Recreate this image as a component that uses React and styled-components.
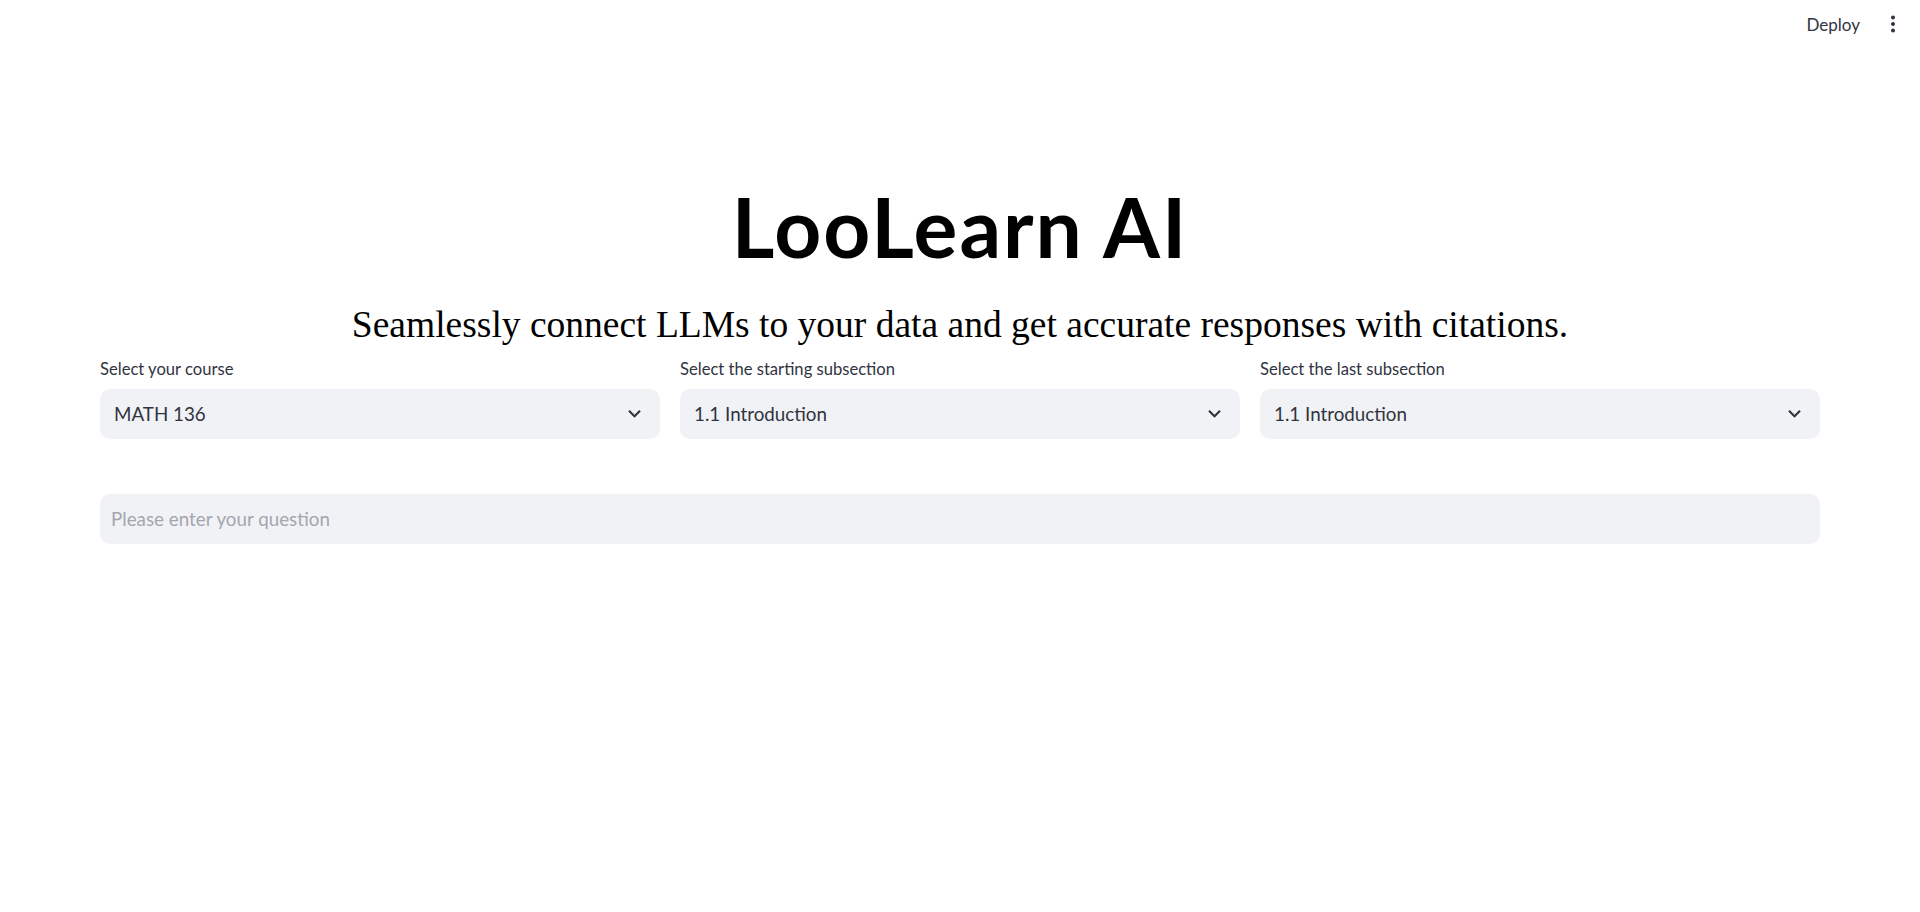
import styled, { createGlobalStyle } from "styled-components";

const GlobalStyle = createGlobalStyle`
  body {
    margin: 0;
    background: #ffffff;
    font-family: "Source Sans Pro", Lato, "Noto Sans", sans-serif;
    color: #31333f;
  }
`;

const Header = styled.header`
  display: flex;
  justify-content: flex-end;
  align-items: center;
  height: 48px;
  padding: 0 24px 0 0;
  gap: 22px;
`;

const DeployBtn = styled.button`
  border: none;
  background: transparent;
  font-family: inherit;
  font-size: 17px;
  color: #31333f;
  padding: 4px 8px;
  cursor: pointer;
`;

const MenuBtn = styled.button`
  border: none;
  background: transparent;
  padding: 0;
  display: flex;
  align-items: center;
  cursor: pointer;
`;

const Main = styled.main`
  padding: 0 100px;
`;

const Title = styled.h1`
  margin: 129px 0 0;
  text-align: center;
  font-size: 82px;
  font-weight: 700;
  letter-spacing: 2px;
  line-height: 1.2;
  color: #000;
`;

const Subtitle = styled.p`
  margin: 27px 0 0;
  text-align: center;
  font-family: "Liberation Serif", "Times New Roman", serif;
  font-size: 37.5px;
  line-height: 1.2;
  color: #000;
`;

const SelectRow = styled.div`
  display: grid;
  grid-template-columns: repeat(3, 1fr);
  gap: 20px;
  margin-top: 8px;
`;

const Field = styled.div`
  display: flex;
  flex-direction: column;
`;

const Label = styled.label`
  font-size: 16.6px;
  line-height: 1.7;
  color: #31333f;
  margin-bottom: 5px;
`;

const SelectBox = styled.div`
  display: flex;
  align-items: center;
  justify-content: space-between;
  height: 50px;
  box-sizing: border-box;
  padding: 0 13px 0 14px;
  background: #f0f2f6;
  border-radius: 10px;
  font-size: 18.8px;
  color: #31333f;
`;

const Question = styled.input`
  display: block;
  width: 100%;
  box-sizing: border-box;
  height: 50px;
  margin-top: 55px;
  padding: 0 11px;
  border: none;
  outline: none;
  background: #f0f2f6;
  border-radius: 10px;
  font-family: inherit;
  font-size: 18.8px;
  color: #31333f;

  &::placeholder {
    color: #a4a6ad;
  }
`;

function Chevron() {
  return (
    <svg width="25" height="25" viewBox="0 0 24 24" fill="#31333f">
      <path d="M7.41 8.59L12 13.17l4.59-4.58L18 10l-6 6-6-6 1.41-1.41z" />
    </svg>
  );
}

function Dots() {
  return (
    <svg width="6" height="18" viewBox="0 0 6 18" fill="#31333f">
      <circle cx="3" cy="2.5" r="2" />
      <circle cx="3" cy="9" r="2" />
      <circle cx="3" cy="15.5" r="2" />
    </svg>
  );
}

function Select({ label, value }) {
  return (
    <Field>
      <Label>{label}</Label>
      <SelectBox>
        <span>{value}</span>
        <Chevron />
      </SelectBox>
    </Field>
  );
}

export default function App() {
  return (
    <>
      <GlobalStyle />
      <Header>
        <DeployBtn>Deploy</DeployBtn>
        <MenuBtn>
          <Dots />
        </MenuBtn>
      </Header>
      <Main>
        <Title>LooLearn AI</Title>
        <Subtitle>
          Seamlessly connect LLMs to your data and get accurate responses with
          citations.
        </Subtitle>
        <SelectRow>
          <Select label="Select your course" value="MATH 136" />
          <Select label="Select the starting subsection" value="1.1 Introduction" />
          <Select label="Select the last subsection" value="1.1 Introduction" />
        </SelectRow>
        <Question placeholder="Please enter your question" />
      </Main>
    </>
  );
}
